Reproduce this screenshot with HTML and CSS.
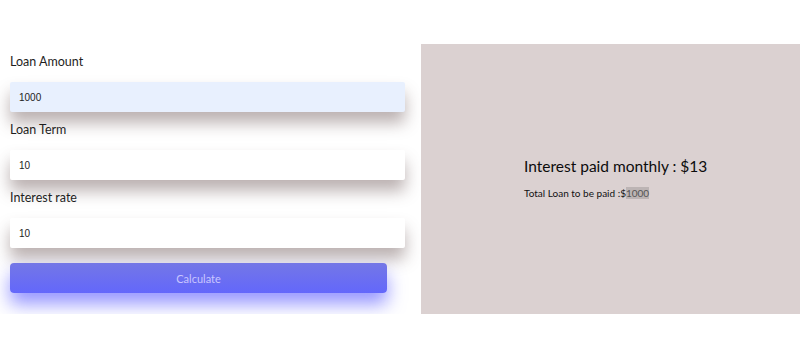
FILE: index.html
```html
<!DOCTYPE html>
<html>
<head>
<meta charset="UTF-8">
<title>Loan Calculator</title>
<link rel="stylesheet" href="styles.css">
</head>
<body>

<div class="wrap">
    <div class="form">
        <label for="amount">Loan Amount</label>
        <input class="filled" id="amount" type="text" value="1000">
        <label for="term">Loan Term</label>
        <input id="term" type="text" value="10">
        <label for="rate">Interest rate</label>
        <input id="rate" type="text" value="10">
        <button class="btn">Calculate</button>
    </div>
    <div class="result">
        <div class="result-inner">
            <h2>Interest paid monthly : $13</h2>
            <p>Total Loan to be paid :$<span class="mark">1000</span></p>
        </div>
    </div>
</div>

</body>
</html>
```

FILE: styles.css
```css
* {
    margin: 0;
    padding: 0;
    box-sizing: border-box;
}

body {
    background: #fff;
    font-family: Lato, "Open Sans", sans-serif;
    color: #222;
}

.wrap {
    display: flex;
    padding-top: 44px;
}

.form {
    width: 421px;
    padding: 10px 16px 0 10px;
    display: flex;
    flex-direction: column;
}

.form label {
    font-size: 12.5px;
    line-height: 16px;
    color: #1e1e1e;
    margin-bottom: 12px;
}

.form input {
    height: 30px;
    border: none;
    outline: none;
    border-radius: 2px;
    background: #fff;
    padding: 0 9px;
    font-family: "Liberation Sans", Arial, sans-serif;
    font-size: 10px;
    color: #222;
    box-shadow: 0 11px 16px rgba(85, 60, 60, 0.4);
    margin-bottom: 10px;
}

.form input.filled {
    background: #e8f0fe;
}

.btn {
    width: 377px;
    height: 30px;
    margin-top: 5px;
    border: none;
    border-radius: 4px;
    background: linear-gradient(#7477e6, #6367fb);
    color: #c9c6ff;
    font-family: Lato, sans-serif;
    font-size: 11px;
    box-shadow: 0 11px 18px rgba(80, 80, 255, 0.6);
}

.result {
    width: 379px;
    height: 270px;
    background: #dbd1d1;
    display: flex;
    align-items: center;
    padding-left: 103px;
}

.result-inner {
    margin-top: -2px;
}

.result h2 {
    font-weight: normal;
    font-size: 15.5px;
    color: #0c0c0c;
    margin-bottom: 12px;
}

.result p {
    font-size: 10px;
    color: #111;
}

.result .mark {
    background: #bcb4b4;
    color: #555;
}
```
